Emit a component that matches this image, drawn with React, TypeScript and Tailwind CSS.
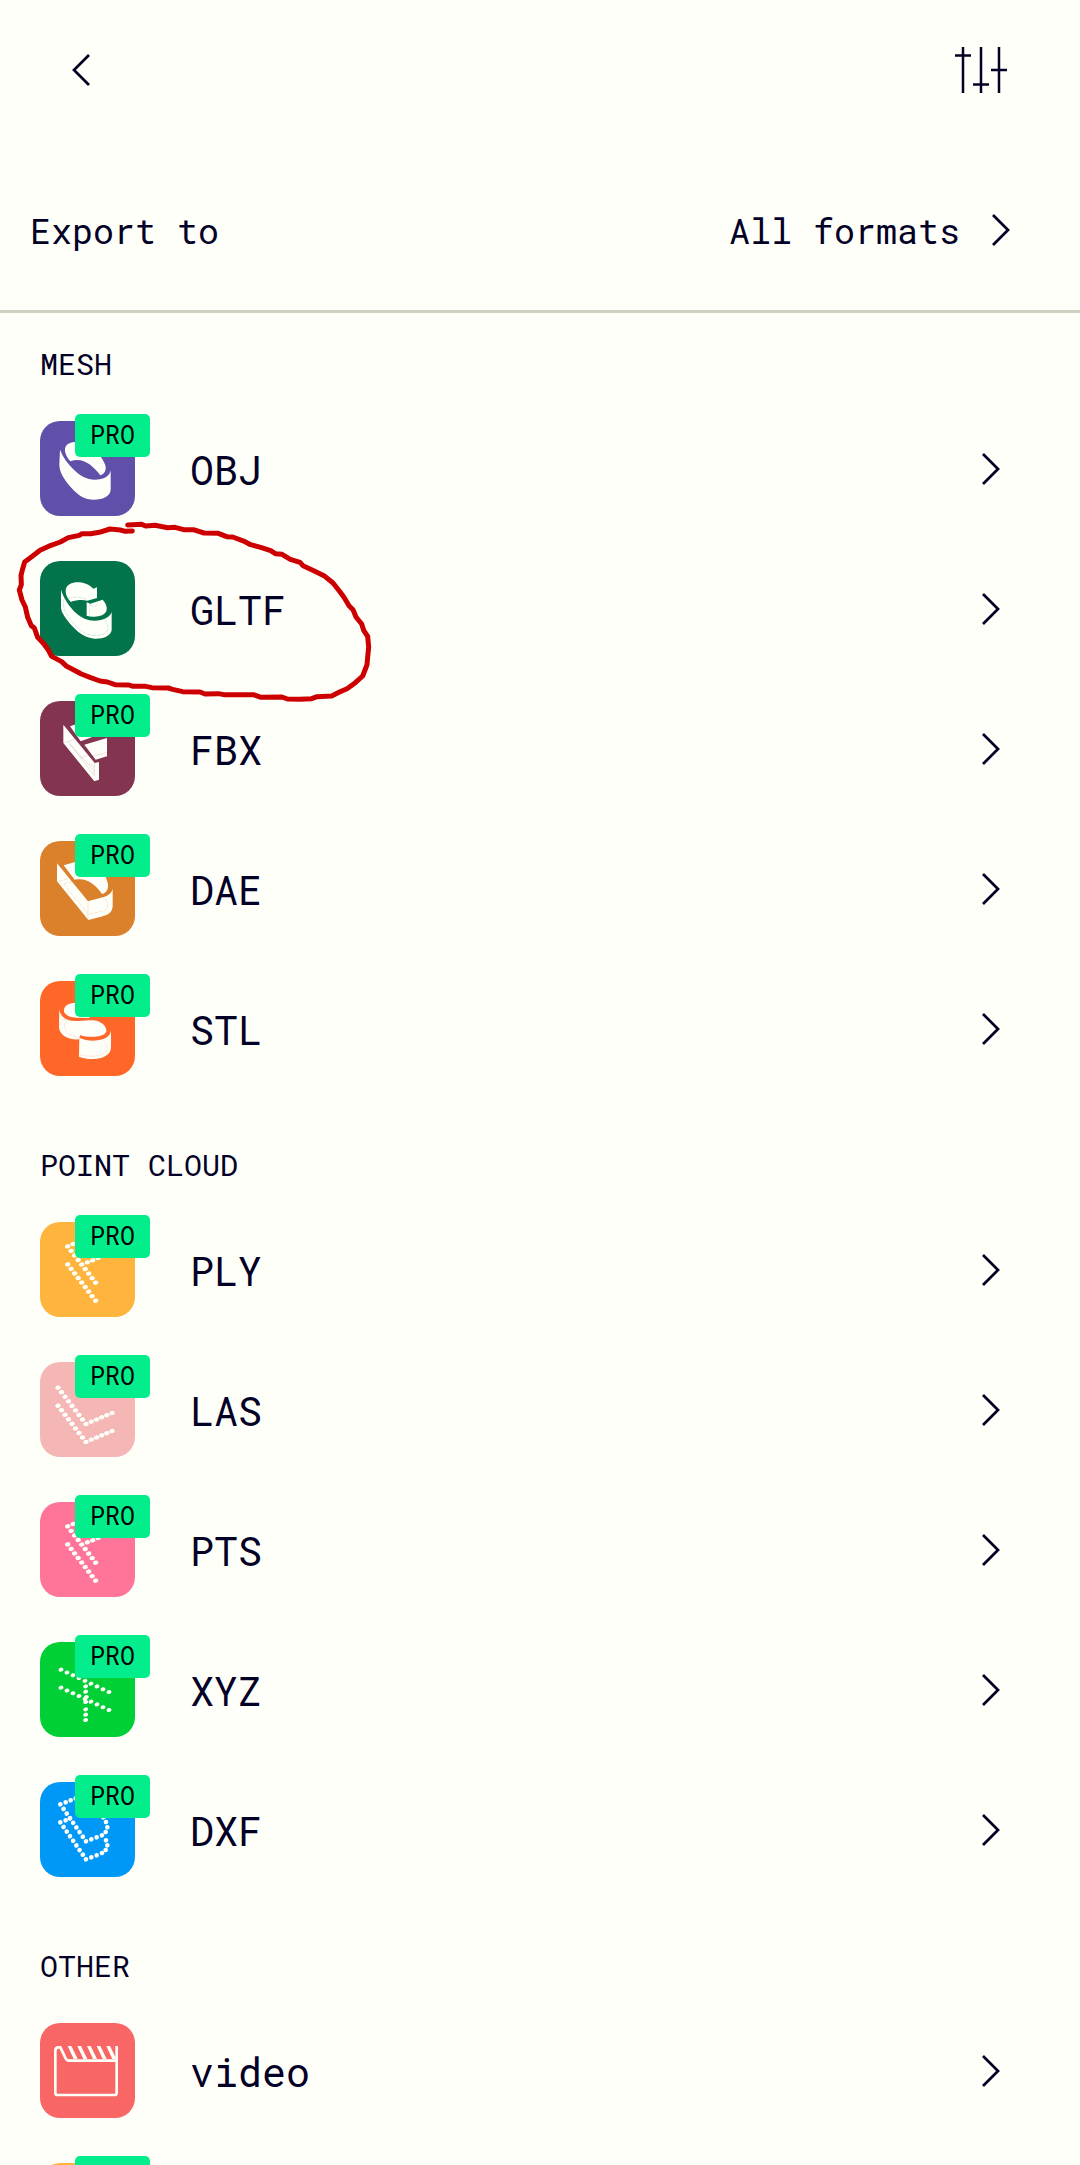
import type { ReactNode } from 'react';

type Point = [number, number];

type Format = {
  name: string;
  tile: string;
  pro?: boolean;
  marked?: boolean;
  art?: ReactNode;
};

const WHITE = '#fffffa';

function line(from: Point, to: Point, count: number): Point[] {
  return Array.from({ length: count }, (_, i): Point => [
    from[0] + ((to[0] - from[0]) * i) / (count - 1),
    from[1] + ((to[1] - from[1]) * i) / (count - 1),
  ]);
}

function Art({ box, children }: { box: string; children: ReactNode }) {
  return (
    <svg viewBox={box} className="size-full" fill={WHITE} aria-hidden="true">
      {children}
    </svg>
  );
}

function Dots({ box, points, rx = 8, ry = 6.5 }: { box: string; points: Point[]; rx?: number; ry?: number }) {
  return (
    <Art box={box}>
      {points.map(([x, y], i) => (
        <ellipse key={i} cx={x} cy={y} rx={rx} ry={ry} transform={`rotate(-12 ${x} ${y})`} />
      ))}
    </Art>
  );
}

const pDots: Point[] = [
  ...line([143, 139], [227, 248], 9),
  ...line([143, 193], [227, 302], 9),
  ...line([159, 132], [207, 113], 4),
  [202, 187],
  [218, 181],
  [234, 174],
];

const lDots: Point[] = [
  ...line([114, 113], [198, 222], 9),
  ...line([214, 215], [276, 189], 5),
  ...line([114, 167], [198, 276], 9),
  ...line([214, 269], [276, 243], 5),
];

const xDots: Point[] = [
  ...line([123, 119], [267, 186], 9),
  ...line([123, 173], [267, 240], 9),
  [197, 169],
  [197, 185],
  [199, 201],
  [197, 216],
  [197, 238],
  [197, 254],
  [197, 270],
];

const dDots: Point[] = [
  ...line([121, 523], [198, 634], 9),
  ...line([121, 577], [198, 688], 9),
  [137, 517],
  [152, 511],
  [167, 505],
  [137, 571],
  [150, 565],
  [214, 628],
  [230, 622],
  [246, 616],
  [257, 606],
  [262, 592],
  [258, 576],
  [250, 562],
  [214, 682],
  [230, 676],
  [246, 669],
  [257, 660],
  [262, 646],
  [258, 631],
];

const groups: { title: string; formats: Format[] }[] = [
  {
    title: 'MESH',
    formats: [
      {
        name: 'OBJ',
        tile: 'bg-[#6150a9]',
        pro: true,
        art: (
          <Art box="60 63 285 285">
            <path d="M120 149 C128 170 142 190 160 208 C180 228 200 239 224 239 C252 239 269 229 272 211 V268 C272 289 250 299 221 299 C195 299 174 286 154 263 C132 238 118 216 118 194Z" />
            <path d="M151 184 C138 168 134 156 135 146 C138 131 152 126 172 126 C210 126 245 164 256 196 C260 212 253 222 241 226 C218 196 188 170 151 184Z" />
          </Art>
        ),
      },
      {
        name: 'GLTF',
        tile: 'bg-[#03734b]',
        marked: true,
        art: (
          <Art box="60 63 285 285">
            <path d="M123 149 C132 177 148 200 168 219 C184 234 202 242 224 242 C250 242 270 232 275 216 V269 C274 287 249 297 225 296 C199 295 177 281 157 259 C137 236 123 218 123 202Z" />
            <path d="M152 186 C141 174 136 162 137 150 C139 135 154 127 174 127 C192 127 208 134 220 146 L231 142 V174 L202 182 C188 179 168 180 152 186Z" />
            <path d="M200 187 L211 191 L248 179 C257 188 262 201 260 211 C255 226 237 231 219 230 C213 230 206 229 200 227Z" />
            <g fill="none" stroke="#03734b" strokeWidth="1" opacity="0.45" strokeDasharray="12 3">
              <path d="M133 176 C126 192 132 212 146 231 C168 264 194 286 225 287 C248 287 263 277 264 263 C263 249 256 240 249 234" />
              <path d="M144 175 C162 169 184 171 201 178 M209 190 V228" />
              <path d="M212 193 C217 203 228 200 231 194 V188" />
            </g>
          </Art>
        ),
      },
      {
        name: 'FBX',
        tile: 'bg-[#833450]',
        pro: true,
        art: (
          <Art box="60 63 285 285">
            <path d="M130 134 L224 249 L237 246 V299 L223 304 L130 189Z" />
            <path d="M150 139 L215 117 V172 L182 184Z" />
            <path d="M193 194 L261 174 V229 L227 239Z" />
            <g fill="none" stroke="#833450" strokeWidth="1" opacity="0.45">
              <path d="M130 189 L165 178 M146 186 L223 287 V249 M150 193 L223 273 M178 235 L205 226 M214 229 L261 218" />
              <path d="M207 250 L223 262" />
            </g>
          </Art>
        ),
      },
      {
        name: 'DAE',
        tile: 'bg-[#db802b]',
        pro: true,
        art: (
          <Art box="60 63 285 285">
            <path d="M111 130 L204 244 L248 232 C265 227 275 219 278 206 V259 C277 277 266 284 251 288 L205 300 L111 184Z" />
            <path d="M131 136 L190 119 C225 117 255 154 263 188 C267 205 260 218 246 222 C232 199 202 173 171 178 L164 179Z" />
            <g fill="none" stroke="#db802b" strokeWidth="1.5" opacity="0.4">
              <path d="M204 244 V300" />
              <path strokeDasharray="12 3" d="M116 184 L164 171 M131 192 L205 283 L245 274 C263 270 268 257 260 245 C257 239 252 234 247 230 M132 191 L176 180" />
            </g>
          </Art>
        ),
      },
      {
        name: 'STL',
        tile: 'bg-[#ff6728]',
        pro: true,
        art: (
          <Art box="60 63 285 285">
            <path d="M118 146 C119 169 138 183 168 183 C187 184 203 181 216 181 C244 182 260 198 259 215 C252 228 230 231 207 230 C193 230 184 227 180 226 L178 238 C145 241 118 225 117 201Z" />
            <path d="M132 155 C130 139 143 128 169 128 C202 128 211 147 208 174 L170 173 C150 173 136 165 132 155Z" />
            <path d="M178 233 C199 244 227 244 248 238 C264 233 272 223 273 211 V262 C273 284 250 297 218 297 C201 297 188 294 177 290Z" />
            <g fill="none" stroke="#ff6728" strokeWidth="1.5" opacity="0.35" strokeDasharray="12 3">
              <path d="M118 196 C124 179 140 173 153 180 M133 194 C133 215 150 230 177 231 M133 194 C137 184 146 181 156 181" />
              <path d="M181 284 C206 292 240 290 256 277 C266 263 260 247 248 241" />
            </g>
          </Art>
        ),
      },
    ],
  },
  {
    title: 'POINT CLOUD',
    formats: [
      { name: 'PLY', tile: 'bg-[#ffb43e]', pro: true, art: <Dots box="60 66 285 285" points={pDots} /> },
      { name: 'LAS', tile: 'bg-[#f5b6b6]', pro: true, art: <Dots box="60 36 285 285" points={lDots} /> },
      { name: 'PTS', tile: 'bg-[#ff759a]', pro: true, art: <Dots box="60 66 285 285" points={pDots} /> },
      { name: 'XYZ', tile: 'bg-[#00cf36]', pro: true, art: <Dots box="60 36 285 285" points={xDots} rx={7.5} ry={6} /> },
      { name: 'DXF', tile: 'bg-[#0098f7]', pro: true, art: <Dots box="60 456 285 285" points={dDots} rx={7} ry={7} /> },
    ],
  },
  {
    title: 'OTHER',
    formats: [
      {
        name: 'video',
        tile: 'bg-[#f96666]',
        art: (
          <Art box="60 249 285 285">
            <path
              d="M290 318 V458 Q290 465 283 465 H113 Q106 465 106 458 V332 Q106 322 116 322 H121 L138 357 Q141 362 147 362 H290"
              fill="none"
              stroke={WHITE}
              strokeWidth="8"
            />
            <path d="M143 318 H154 L173 357 H161Z M172 318 H183 L202 357 H190Z M201 318 H212 L231 357 H219Z M230 318 H241 L260 357 H248Z M259 318 H270 L289 357 H277Z" />
          </Art>
        ),
      },
      { name: '', tile: 'bg-[#ffb43e]', pro: true },
    ],
  },
];

function Chevron({ back = false }: { back?: boolean }) {
  return (
    <svg
      viewBox="0 0 18 32"
      className="h-8 w-[18px] shrink-0"
      fill="none"
      stroke="currentColor"
      strokeWidth="2.75"
      aria-hidden="true"
    >
      <path d={back ? 'M17 1 L2 16 L17 31' : 'M1 1 L16 16 L1 31'} />
    </svg>
  );
}

function HandDrawnCircle() {
  return (
    <svg
      viewBox="0 0 1200 990"
      className="pointer-events-none absolute -top-[149px] left-0 z-10 h-[330px] w-[400px]"
      fill="none"
      stroke="#cc0000"
      strokeWidth="15"
      strokeLinecap="round"
      strokeLinejoin="round"
      aria-hidden="true"
    >
      <path d="M383 405 L425 403 L437 408 L465 406 L503 413 L525 412 L551 419 L580 419 L612 429 L655 430 L680 440 L698 441 L735 455 L752 464 L782 472 L812 482 L826 491 L846 493 L871 508 L900 517 L909 527 L935 539 L972 557 L999 579 L1018 603 L1032 622 L1047 647 L1059 659 L1068 681 L1085 702 L1091 721 L1103 739 L1106 772 L1103 801 L1101 824 L1095 840 L1088 858 L1066 878 L1041 896 L1017 907 L995 918 L951 920 L935 926 L900 928 L862 927 L846 921 L783 922 L760 914 L671 914 L655 911 L615 912 L600 906 L548 905 L518 898 L505 894 L456 893 L437 889 L399 889 L387 885 L345 884 L322 876 L300 873 L272 863 L244 852 L216 837 L200 829 L185 815 L155 799 L145 780 L132 762 L113 742 L103 714 L94 707 L83 682 L76 651 L66 630 L58 600 L64 584 L63 557 L67 540 L74 516 L98 498 L120 481 L153 466 L181 456 L205 443 L238 436 L246 431 L272 431 L298 427 L330 417 L361 420 L376 424 L397 423" />
    </svg>
  );
}

function FormatRow({ format }: { format: Format }) {
  return (
    <li className="relative">
      <button
        type="button"
        aria-label={format.name || 'More export options'}
        className="flex w-full items-center pt-[22px] pr-20 pb-[23px] pl-10 text-left"
      >
        <span className={`relative size-[95px] shrink-0 rounded-[20px] ${format.tile}`}>
          {format.art}
          {format.pro && (
            <span className="absolute -top-[7px] left-[35px] flex h-[43px] w-[75px] items-center justify-center rounded-[5px] bg-[#03ed8d] pb-0.5 text-[25px] text-black">
              PRO
            </span>
          )}
        </span>
        <span className="ml-[55px] flex-1 pt-0.5 text-[40px] leading-[48px]">{format.name}</span>
        <Chevron />
      </button>
      {format.marked && <HandDrawnCircle />}
    </li>
  );
}

export default function App() {
  return (
    <div className="flex h-screen flex-col bg-[#fffffa] font-['Roboto_Mono','DejaVu_Sans_Mono',monospace] text-[#030126]">
      <header className="shrink-0 border-b-[3px] border-[#d1d1c1]">
        <nav className="flex h-[140px] items-center justify-between px-[72px]">
          <button type="button" aria-label="Back">
            <Chevron back />
          </button>
          <button type="button" aria-label="Settings">
            <svg viewBox="0 0 53 46" className="h-[46px] w-[53px]" stroke="currentColor" strokeWidth="2.5" aria-hidden="true">
              <path d="M8 0 V46 M26 0 V46 M44 0 V46 M0 8.5 H16 M18 37.5 H34 M36 23 H52" />
            </svg>
          </button>
        </nav>
        <div className="flex items-center justify-between pt-[69px] pr-[70px] pb-[59px] pl-[30px] text-[35px] leading-[42px]">
          <h1>Export to</h1>
          <button type="button" className="flex items-center gap-8">
            <span>All formats</span>
            <Chevron />
          </button>
        </div>
      </header>
      <main className="min-h-0 flex-1 overflow-y-auto pt-[10px] [scrollbar-width:none]">
        {groups.map((group) => (
          <section key={group.title} className="pb-[25px]">
            <h2 className="px-10 pt-[21px] pb-[15px] text-[30px] leading-[40px]">{group.title}</h2>
            <ul>
              {group.formats.map((format) => (
                <FormatRow key={format.name} format={format} />
              ))}
            </ul>
          </section>
        ))}
      </main>
    </div>
  );
}
